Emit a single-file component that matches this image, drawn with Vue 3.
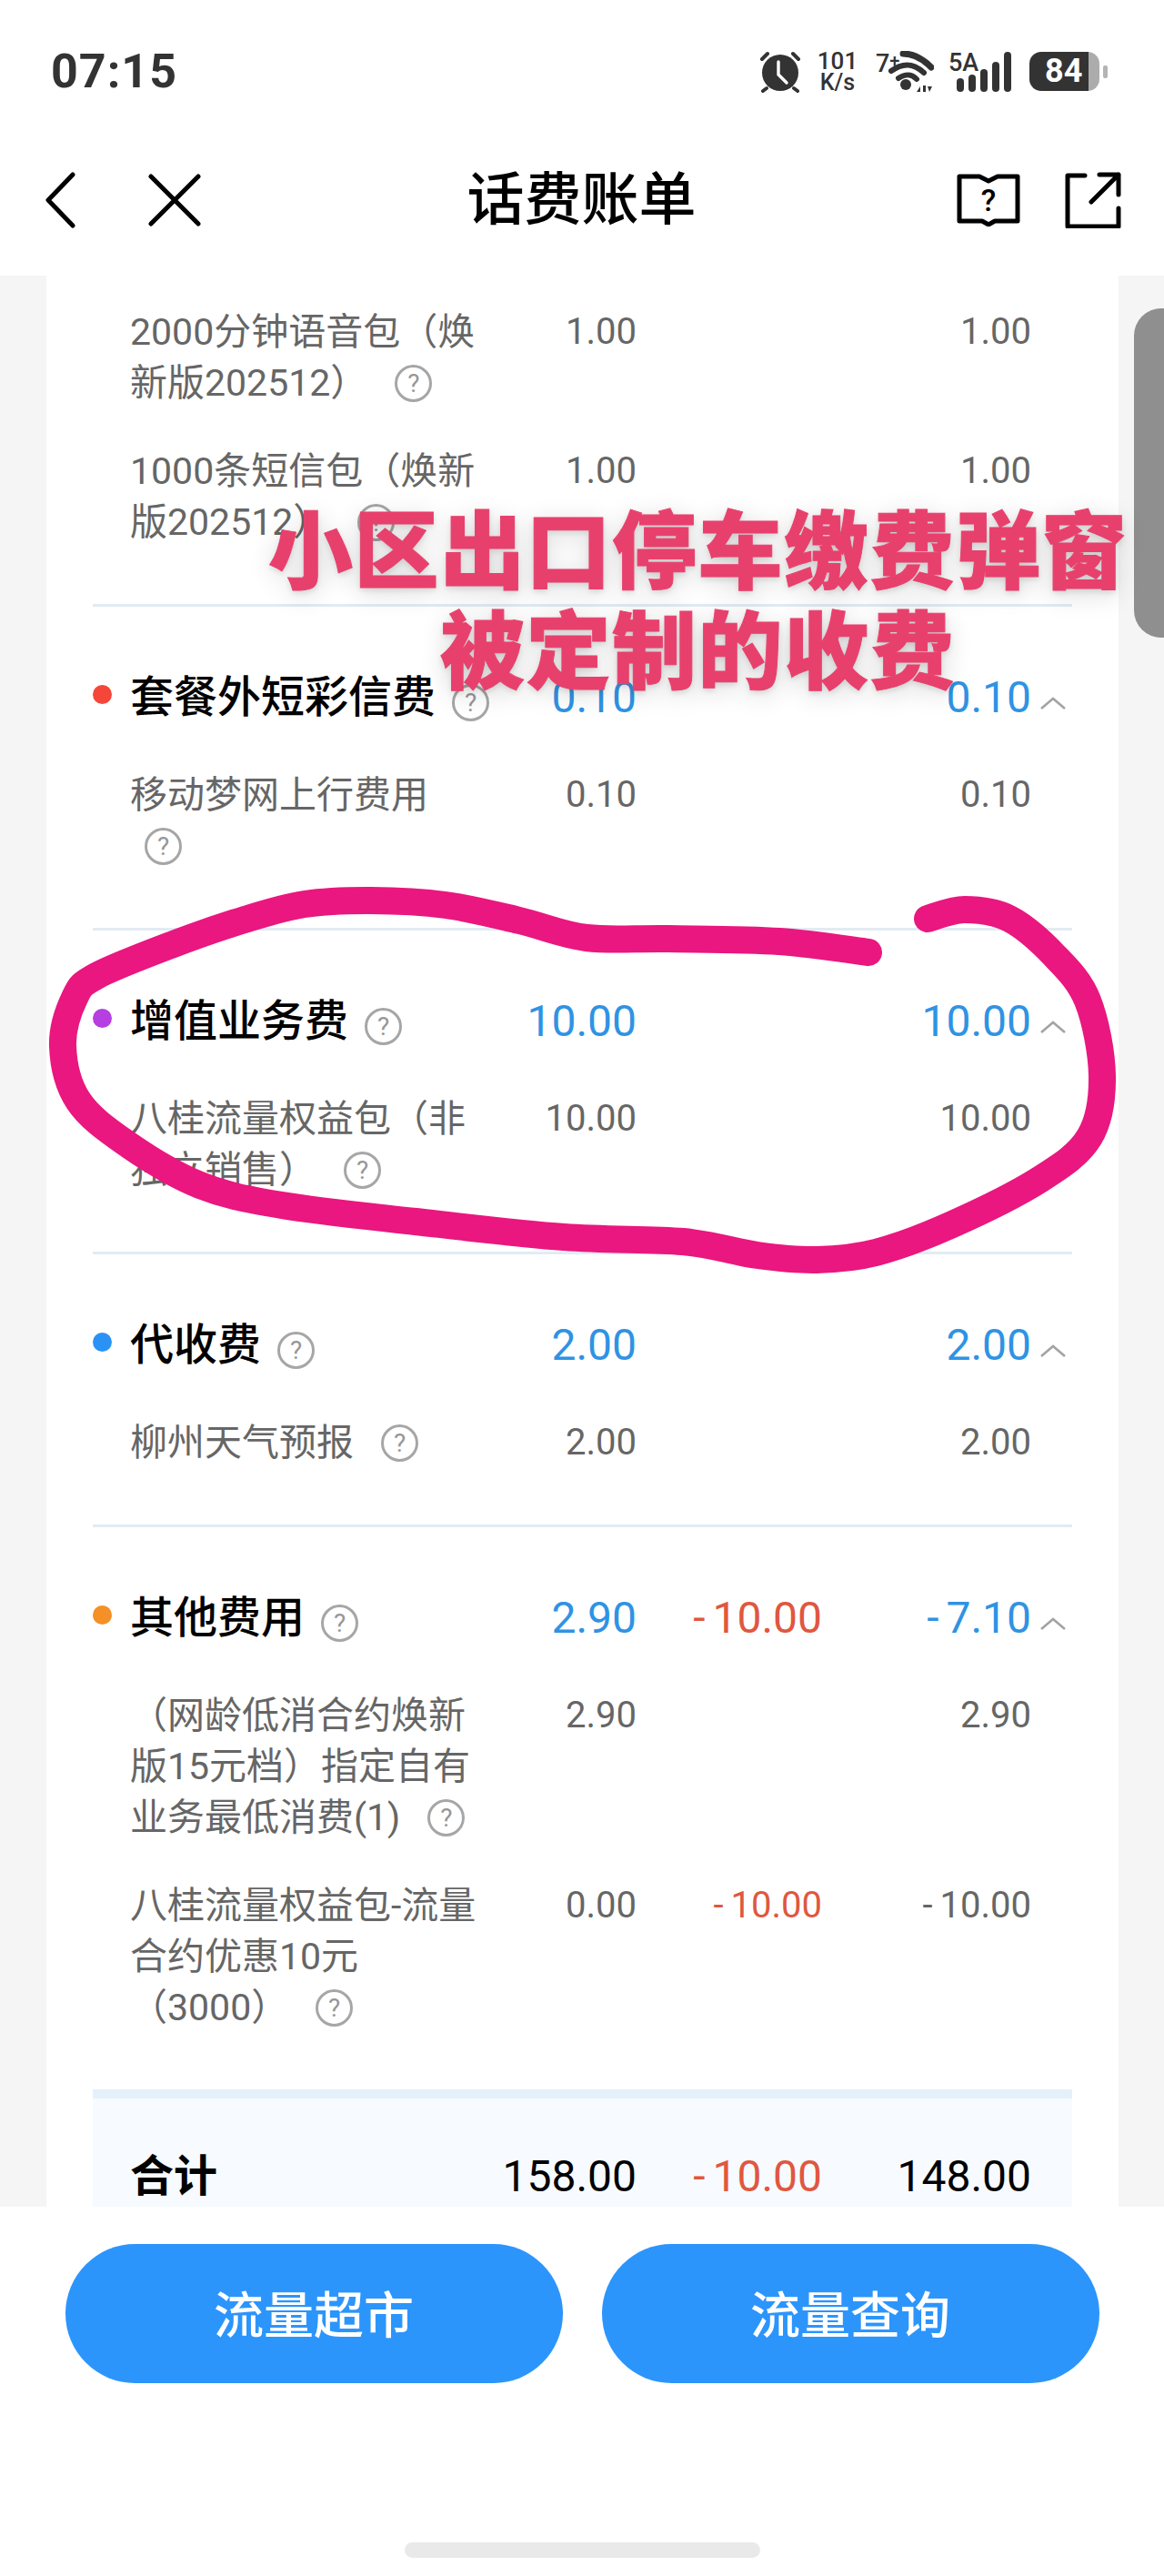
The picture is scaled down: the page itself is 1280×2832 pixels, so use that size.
<script setup>
const groups = [
  {
    subs: [
      { lines: ['2000分钟语音包（焕', '新版202512）'], gap: 'wide', a: '1.00', b: '', c: '1.00' },
      { lines: ['1000条短信包（焕新', '版202512）'], gap: 'wide', a: '1.00', b: '', c: '1.00' },
    ],
  },
  {
    name: '套餐外短彩信费', dot: '#f4473a', a: '0.10', b: '', c: '0.10',
    subs: [{ lines: ['移动梦网上行费用', ''], gap: 'lead', a: '0.10', b: '', c: '0.10' }],
  },
  {
    name: '增值业务费', dot: '#b53fe0', a: '10.00', b: '', c: '10.00',
    subs: [{ lines: ['八桂流量权益包（非', '独立销售）'], gap: 'wide', a: '10.00', b: '', c: '10.00' }],
  },
  {
    name: '代收费', dot: '#2b92f5', a: '2.00', b: '', c: '2.00',
    subs: [{ lines: ['柳州天气预报'], gap: 'wide', a: '2.00', b: '', c: '2.00' }],
  },
  {
    name: '其他费用', dot: '#f49027', a: '2.90', b: '-10.00', c: '-7.10',
    subs: [
      { lines: ['（网龄低消合约焕新', '版15元档）指定自有', '业务最低消费(1)'], gap: 'wide', a: '2.90', b: '', c: '2.90' },
      { lines: ['八桂流量权益包-流量', '合约优惠10元', '（3000）'], gap: 'wide', a: '0.00', b: '-10.00', c: '-10.00' },
    ],
  },
]

const neg = (v) => (v.startsWith('-') ? 'neg' : '')

// pen stroke of the hand drawn circle, in page coordinates
const pen = [
  [1020, 1010], [1061, 1000], [1110, 1010], [1159, 1050], [1196, 1100], [1212, 1183], [1198, 1250],
  [1143, 1297], [1045, 1347], [963, 1377], [898, 1385], [833, 1380], [751, 1365], [620, 1360],
  [457, 1343], [310, 1325], [220, 1303], [139, 1257], [86, 1210], [69, 1150], [82, 1097],
  [106, 1073], [188, 1039], [269, 1011], [335, 994], [408, 990], [490, 995], [571, 1012],
  [645, 1031], [735, 1032], [857, 1035], [955, 1047],
]

const penPath = pen.reduce((d, p, i) => {
  if (i === 0) return `M${p[0]} ${p[1]}`
  const p0 = pen[i - 2] || pen[i - 1]
  const p1 = pen[i - 1]
  const p2 = p
  const p3 = pen[i + 1] || p
  const c1 = [p1[0] + (p2[0] - p0[0]) / 6, p1[1] + (p2[1] - p0[1]) / 6]
  const c2 = [p2[0] - (p3[0] - p1[0]) / 6, p2[1] - (p3[1] - p1[1]) / 6]
  return `${d} C${c1[0]} ${c1[1]} ${c2[0]} ${c2[1]} ${p2[0]} ${p2[1]}`
}, '')
</script>

<template>
  <div class="page">
    <header class="top">
      <div class="status">
        <span class="time">07:15</span>
        <div class="status-icons">
          <svg class="alarm" width="46" height="46" viewBox="0 0 46 46">
            <circle cx="23" cy="24" r="20" fill="#333" />
            <path d="M3 9l6-6M43 9l-6-6M8 41l-4 3M38 41l4 3" stroke="#333" stroke-width="4" stroke-linecap="round" />
            <path d="M21 12v14l9 9" fill="none" stroke="#fff" stroke-width="3.4" stroke-linecap="round" />
          </svg>
          <div class="speed"><span>101</span><span class="unit">K/s</span></div>
          <div class="wifi">
            <span class="wifi-g">7<i>+</i></span>
            <svg width="64" height="46" viewBox="0 0 64 46">
              <path d="M30 3c12 0 21 5 31 15" fill="none" stroke="#333" stroke-width="7" stroke-linecap="round" />
              <path d="M17 22c14-10 25-8 36 2" fill="none" stroke="#333" stroke-width="6" stroke-linecap="round" />
              <path d="M25 30c8-5 14-5 20 1" fill="none" stroke="#333" stroke-width="6" stroke-linecap="round" />
              <circle cx="33" cy="37" r="6" fill="#333" />
              <path d="M45 45l4-6v6zM52 38h3v7h-3zM57 39l5 0-3 6z" fill="#333" />
            </svg>
          </div>
          <div class="signal">
            <span>5A</span>
            <svg width="62" height="44" viewBox="0 0 62 44">
              <rect x="0" y="29" width="8" height="15" rx="4" fill="#333" />
              <rect x="13" y="25" width="8" height="19" rx="4" fill="#333" />
              <rect x="26" y="19" width="8" height="25" rx="4" fill="#333" />
              <rect x="39" y="11" width="8" height="33" rx="4" fill="#333" />
              <rect x="52" y="0" width="8" height="44" rx="4" fill="#333" />
            </svg>
          </div>
          <div class="battery">
            <div class="battery-body"><span>84</span></div>
            <i class="battery-cap"></i>
          </div>
        </div>
      </div>
      <nav class="nav">
        <div class="nav-left">
          <svg width="34" height="62" viewBox="0 0 34 62">
            <path d="M31 3L4 31l27 28" fill="none" stroke="#000" stroke-width="5" stroke-linecap="round" stroke-linejoin="round" />
          </svg>
          <svg width="58" height="58" viewBox="0 0 58 58">
            <path d="M3 3l52 52M55 3L3 55" fill="none" stroke="#000" stroke-width="5" stroke-linecap="round" />
          </svg>
        </div>
        <h1 class="title">话费账单</h1>
        <div class="nav-right">
          <svg width="70" height="58" viewBox="0 0 70 58">
            <path d="M3 3h22l10 5 10-5h22v49H42l-7 4-7-4H3z" fill="none" stroke="#000" stroke-width="5" stroke-linejoin="round" />
            <text x="35" y="41" text-anchor="middle" class="book-mark">?</text>
          </svg>
          <svg width="62" height="62" viewBox="0 0 62 62">
            <path d="M22 4H3v56h56V40M29 33L59 3M38 3h21v22" fill="none" stroke="#000" stroke-width="5" stroke-linecap="round" stroke-linejoin="round" />
          </svg>
        </div>
      </nav>
    </header>

    <main class="scroll">
      <div class="card">
        <section v-for="(g, gi) in groups" :key="gi" class="group">
          <div v-if="g.name" class="row head">
            <i class="dot" :style="{ background: g.dot }"></i>
            <div class="name">
              {{ g.name }}<span class="help head-help">?</span>
            </div>
            <div class="num blue">{{ g.a }}</div>
            <div class="num red" :class="neg(g.b)">{{ g.b }}</div>
            <div class="num blue" :class="neg(g.c)">{{ g.c }}</div>
            <svg class="chev" width="30" height="14" viewBox="0 0 30 14">
              <path d="M2 13L15 2l13 11" fill="none" stroke="#a3a3a3" stroke-width="2.6" />
            </svg>
          </div>
          <div v-for="(s, si) in g.subs" :key="si" class="row sub">
            <i></i>
            <div class="name">
              <div v-for="(l, li) in s.lines" :key="li" class="name-line">
                {{ l }}<span v-if="li === s.lines.length - 1" class="help" :class="s.gap">?</span>
              </div>
            </div>
            <div class="num">{{ s.a }}</div>
            <div class="num red" :class="neg(s.b)">{{ s.b }}</div>
            <div class="num" :class="neg(s.c)">{{ s.c }}</div>
          </div>
        </section>

        <section class="total">
          <div class="row">
            <i></i>
            <div class="name">合计</div>
            <div class="num">158.00</div>
            <div class="num red neg">-10.00</div>
            <div class="num">148.00</div>
          </div>
        </section>
      </div>
      <div class="scrollbar"></div>
    </main>

    <footer class="bottom">
      <div class="buttons">
        <button>流量超市</button>
        <button>流量查询</button>
      </div>
      <div class="home"></div>
    </footer>

    <svg class="scribble" width="1280" height="2832" viewBox="0 0 1280 2832">
      <path :d="penPath" fill="none" stroke="#e9177f" stroke-width="30" stroke-linecap="round" stroke-linejoin="round" />
    </svg>
    <div class="caption">
      <div>小区出口停车缴费弹窗</div>
      <div>被定制的收费</div>
    </div>
  </div>
</template>

<style scoped>
.page {
  position: relative;
  width: 1280px;
  height: 2832px;
  display: flex;
  flex-direction: column;
  overflow: hidden;
  background: #fff;
  font-family: Roboto, "Noto Sans CJK SC", sans-serif;
  color: #000;
}

.top {
  height: 303px;
  flex: none;
}

.status {
  height: 157px;
  padding: 0 62px 0 56px;
  display: flex;
  align-items: center;
  justify-content: space-between;
  box-sizing: border-box;
}

.time {
  font-size: 52px;
  font-weight: 700;
  color: #333;
  letter-spacing: 1px;
}

.status-icons {
  display: flex;
  align-items: center;
  color: #333;
}

.alarm {
  margin-right: 16px;
}

.speed {
  display: flex;
  flex-direction: column;
  align-items: center;
  width: 48px;
  font-size: 26px;
  font-weight: 500;
  line-height: 23px;
  margin-right: 18px;
}

.speed .unit {
  font-size: 25px;
}

.wifi {
  position: relative;
  width: 64px;
  height: 46px;
  margin-right: 16px;
}

.wifi-g {
  position: absolute;
  left: 0;
  top: -4px;
  font-size: 27px;
  font-weight: 500;
  line-height: 30px;
}

.wifi-g i {
  font-style: normal;
  font-size: 20px;
  vertical-align: 5px;
}

.wifi svg {
  display: block;
}

.signal {
  position: relative;
  width: 71px;
  height: 44px;
  margin-right: 18px;
  display: flex;
  justify-content: flex-end;
}

.signal span {
  position: absolute;
  left: 0;
  top: -3px;
  font-size: 27px;
  font-weight: 500;
  line-height: 30px;
}

.battery {
  display: flex;
  align-items: center;
}

.battery-body {
  width: 77px;
  height: 43px;
  border-radius: 13px;
  box-sizing: border-box;
  background: linear-gradient(to right, #333 0, #333 85%, #acacac 85%);
  color: #fff;
  font-size: 36px;
  font-weight: 700;
  line-height: 43px;
  padding-left: 17px;
}

.battery-cap {
  width: 5px;
  height: 14px;
  margin-left: 4px;
  border-radius: 2px;
  background: #b4b4b4;
}

.nav {
  position: relative;
  height: 146px;
  padding: 0 47px 0 49px;
  display: flex;
  align-items: center;
  justify-content: space-between;
  box-sizing: border-box;
  padding-bottom: 20px;
}

.nav-left {
  display: flex;
  align-items: center;
  gap: 80px;
}

.nav-right {
  display: flex;
  align-items: center;
  gap: 49px;
}

.nav svg {
  display: block;
}

.title {
  flex: 1;
  margin: 0;
  text-align: center;
  font-size: 63px;
  font-weight: 500;
  line-height: 70px;
  padding-left: 6px;
}

.book-mark {
  font-size: 34px;
  font-weight: 500;
  fill: #000;
}

.scroll {
  position: relative;
  flex: 1;
  min-height: 0;
  overflow: hidden;
  background: #f5f5f5;
}

.card {
  width: 1179px;
  margin-left: 51px;
  box-sizing: border-box;
  padding: 34px 51px 0;
  background: #fff;
  min-height: 100%;
}

.scrollbar {
  position: absolute;
  right: 0;
  top: 36px;
  width: 33px;
  height: 362px;
  border-radius: 30px 0 0 30px;
  background: #8f8f8f;
}

.group {
  padding-bottom: 62px;
  margin-bottom: 72px;
  border-bottom: 3px solid #e2ebf4;
}

.group:nth-of-type(5) {
  margin-bottom: 0;
  border-bottom: 10px solid #e4f1fb;
}

.row {
  display: grid;
  grid-template-columns: 41px 402px 155px 204px 230px 45px;
  font-size: 48px;
  line-height: 56px;
}

.row .num {
  text-align: right;
  white-space: nowrap;
  height: 56px;
}

.num.neg::first-letter {
  letter-spacing: 8px;
}

.head {
  font-weight: 500;
  margin-bottom: 51px;
  height: 56px;
}

.head .num {
  font-weight: 400;
}

.head .name {
  height: 56px;
  white-space: nowrap;
  font-weight: 500;
}

.dot {
  width: 21px;
  height: 21px;
  margin-top: 14px;
  border-radius: 50%;
}

.chev {
  margin: 27px 0 0 9px;
}

.sub {
  font-size: 41px;
  color: #666;
}

.sub + .sub {
  margin-top: 41px;
}

.sub .name-line {
  white-space: nowrap;
  height: 56px;
}

.sub .num {
  font-size: 40px;
}

.blue {
  color: #2f93e3;
}

.red {
  color: #e0573f;
}

.help {
  display: inline-block;
  width: 41px;
  height: 41px;
  box-sizing: border-box;
  border: 3px solid #a6a6a6;
  border-radius: 50%;
  color: #969696;
  font-size: 28px;
  font-weight: 400;
  line-height: 35px;
  text-align: center;
  vertical-align: 4px;
}

.help.wide {
  margin-left: 30px;
}

.help.lead {
  margin-left: 16px;
}

.head-help {
  margin-left: 18px;
  vertical-align: 1px;
}

.total {
  background: #f7fbff;
  padding: 58px 0 30px;
}

.total .name {
  font-weight: 700;
}

.bottom {
  position: relative;
  flex: none;
  height: 406px;
  background: #fff;
  box-sizing: border-box;
  padding-top: 41px;
}

.buttons {
  display: flex;
  justify-content: center;
  gap: 43px;
}

.buttons button {
  width: 547px;
  height: 153px;
  border: 0;
  border-radius: 77px;
  background: #2c95fc;
  color: #fff;
  font-family: inherit;
  font-size: 55px;
  font-weight: 500;
  padding-bottom: 6px;
}

.home {
  position: absolute;
  left: 445px;
  bottom: 20px;
  width: 391px;
  height: 17px;
  border-radius: 9px;
  background: #e9e9e9;
}

.scribble {
  position: absolute;
  left: 0;
  top: 0;
  pointer-events: none;
}

.caption {
  position: absolute;
  left: 290px;
  top: 545px;
  width: 955px;
  text-align: center;
  color: #e8406c;
  font-family: "Noto Sans CJK SC", sans-serif;
  font-size: 93px;
  font-weight: 900;
  line-height: 110px;
  letter-spacing: 1.5px;
  white-space: nowrap;
  -webkit-text-stroke: 1px #e8406c;
  text-shadow: 0 3px 6px rgba(0, 0, 0, 0.12), 0 6px 28px rgba(0, 0, 0, 0.16);
}
</style>
